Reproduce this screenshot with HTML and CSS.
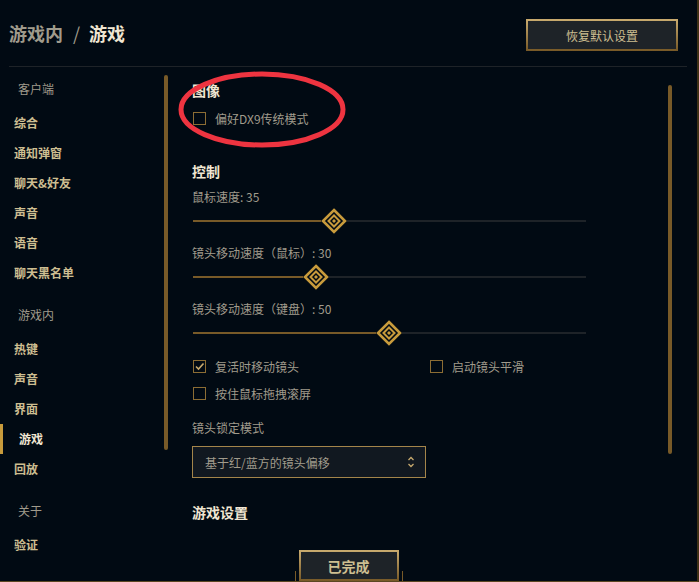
FILE: index.html
```html
<!DOCTYPE html>
<html lang="zh-CN">
  <head>
    <meta charset="UTF-8" />
    <meta name="viewport" content="width=device-width, initial-scale=1.0" />
    <title>设置 - 游戏</title>
    <link rel="stylesheet" href="styles.css">
  </head>

  <body>
    <div class="frame">
      <header class="topbar">
        <h1 class="crumbs">
          <span class="crumb-parent">游戏内</span>
          <span class="crumb-sep">/</span>
          <span class="crumb-current">游戏</span>
        </h1>
        <button class="btn-gold btn-reset" type="button">恢复默认设置</button>
      </header>

      <div class="layout">
        <nav class="nav">
          <div class="nav-list">
            <div class="nav-group">
              <div class="nav-label">客户端</div>
              <a class="nav-item">综合</a>
              <a class="nav-item">通知弹窗</a>
              <a class="nav-item">聊天&amp;好友</a>
              <a class="nav-item">声音</a>
              <a class="nav-item">语音</a>
              <a class="nav-item">聊天黑名单</a>
            </div>
            <div class="nav-group">
              <div class="nav-label">游戏内</div>
              <a class="nav-item">热键</a>
              <a class="nav-item">声音</a>
              <a class="nav-item">界面</a>
              <a class="nav-item is-active">游戏</a>
              <a class="nav-item">回放</a>
            </div>
            <div class="nav-group">
              <div class="nav-label">关于</div>
              <a class="nav-item">验证</a>
            </div>
          </div>
          <div class="nav-scroll"></div>
        </nav>

        <main class="content">
          <div class="content-inner">
            <h2 class="section-title">图像</h2>
            <label class="check-row first-check">
              <span class="box"></span>
              <span>偏好DX9传统模式</span>
            </label>

            <h2 class="section-title control-title">控制</h2>

            <div class="slider-field">
              <div class="field-text">鼠标速度: 35</div>
              <div class="slider" style="--v: 35">
                <span class="slider-fill"></span>
                <svg class="thumb" viewBox="0 0 26 26" width="26" height="26">
                  <polygon points="13,2 24,13 13,24 2,13" fill="#010a13" stroke="#c89b3c" stroke-width="2.6" />
                  <polygon points="13,7.5 18.5,13 13,18.5 7.5,13" fill="none" stroke="#c89b3c" stroke-width="2" />
                  <polygon points="13,11 15,13 13,15 11,13" fill="#c89b3c" />
                </svg>
                <span class="slider-rest"></span>
              </div>
            </div>

            <div class="slider-field">
              <div class="field-text">镜头移动速度（鼠标）: 30</div>
              <div class="slider" style="--v: 30">
                <span class="slider-fill"></span>
                <svg class="thumb" viewBox="0 0 26 26" width="26" height="26">
                  <polygon points="13,2 24,13 13,24 2,13" fill="#010a13" stroke="#c89b3c" stroke-width="2.6" />
                  <polygon points="13,7.5 18.5,13 13,18.5 7.5,13" fill="none" stroke="#c89b3c" stroke-width="2" />
                  <polygon points="13,11 15,13 13,15 11,13" fill="#c89b3c" />
                </svg>
                <span class="slider-rest"></span>
              </div>
            </div>

            <div class="slider-field">
              <div class="field-text">镜头移动速度（键盘）: 50</div>
              <div class="slider" style="--v: 50">
                <span class="slider-fill"></span>
                <svg class="thumb" viewBox="0 0 26 26" width="26" height="26">
                  <polygon points="13,2 24,13 13,24 2,13" fill="#010a13" stroke="#c89b3c" stroke-width="2.6" />
                  <polygon points="13,7.5 18.5,13 13,18.5 7.5,13" fill="none" stroke="#c89b3c" stroke-width="2" />
                  <polygon points="13,11 15,13 13,15 11,13" fill="#c89b3c" />
                </svg>
                <span class="slider-rest"></span>
              </div>
            </div>

            <div class="check-grid">
              <label class="check-row">
                <span class="box">
                  <svg viewBox="0 0 13 13" width="13" height="13">
                    <path d="M3 6.5 L5.5 9 L10.5 3.5" fill="none" stroke="#c8aa6e" stroke-width="1.6" />
                  </svg>
                </span>
                <span>复活时移动镜头</span>
              </label>
              <label class="check-row">
                <span class="box"></span>
                <span>启动镜头平滑</span>
              </label>
              <label class="check-row">
                <span class="box"></span>
                <span>按住鼠标拖拽滚屏</span>
              </label>
            </div>

            <div class="field-text lock-label">镜头锁定模式</div>
            <div class="select">
              <span>基于红/蓝方的镜头偏移</span>
              <svg class="select-arrows" viewBox="0 0 8 12" width="8" height="12">
                <path d="M1.5 4 L4 1.5 L6.5 4" fill="none" stroke="#c8aa6e" stroke-width="1.3" />
                <path d="M1.5 8 L4 10.5 L6.5 8" fill="none" stroke="#c8aa6e" stroke-width="1.3" />
              </svg>
            </div>

            <h2 class="section-title game-title">游戏设置</h2>
          </div>
          <div class="content-scroll"></div>
        </main>
      </div>

      <div class="footer-done">
        <span class="done-deco"></span>
        <button class="btn-gold btn-done" type="button">已完成</button>
        <span class="done-deco"></span>
      </div>

      <!-- 标注圈 -->
      <svg class="annotation" viewBox="0 0 190 95" width="190" height="95">
        <ellipse cx="92" cy="44.5" rx="81" ry="35.5" fill="none" stroke="#ee3440" stroke-width="5" />
      </svg>
    </div>
  </body>
</html>
```

FILE: styles.css
```css
body {
  margin: 0;
  background-color: #010a13;
  color: #a09b8c;
  font-family: "Noto Sans CJK SC", "Noto Sans", sans-serif;
  font-size: 12px;
}

.frame {
  position: relative;
  width: 697px;
  height: 581px;
  border-right: 2px solid #3f3116;
  border-bottom: 1px solid #5b4722;
  overflow: hidden;
}

/* 顶部 */
.topbar {
  display: flex;
  justify-content: space-between;
  align-items: flex-start;
  height: 66px;
  margin: 0 10px 0 9px;
  border-bottom: 1px solid #1e2328;
}

.crumbs {
  margin: 21px 0 0;
  font-size: 18px;
  line-height: 24px;
  font-weight: bold;
  display: flex;
}

.crumb-parent {
  color: #a09b8c;
}

.crumb-sep {
  color: #a09b8c;
  font-weight: normal;
  margin: 0 9px 0 10px;
}

.crumb-current {
  color: #f0e6d2;
}

.btn-gold {
  font-family: inherit;
  background-color: #1e2328;
  color: #cdbe91;
  border: 2px solid;
  border-image: linear-gradient(#c8aa6e, #785a28) 1;
  cursor: pointer;
  padding: 0;
}

.btn-reset {
  margin: 19px 9px 0 0;
  width: 152px;
  height: 32px;
  font-size: 12px;
}

/* 主体 */
.layout {
  display: flex;
  height: 514px;
}

.nav {
  display: flex;
  width: 192px;
  flex: none;
}

.nav-list {
  width: 164px;
  padding-top: 7px;
}

.nav-group + .nav-group {
  margin-top: 12px;
}

.nav-label {
  height: 30px;
  line-height: 30px;
  padding-left: 18px;
  margin-bottom: 4px;
  color: #a09b8c;
}

.nav-item {
  display: block;
  height: 30px;
  line-height: 30px;
  padding-left: 14px;
  color: #cdbe91;
  font-weight: bold;
  cursor: pointer;
}

.nav-item.is-active {
  padding-left: 19px;
  color: #f0e6d2;
  box-shadow: inset 3px 0 0 #c89b3c;
}

.nav-scroll,
.content-scroll {
  width: 4px;
  border-radius: 2px;
  background-color: #785a28;
  flex: none;
}

.nav-scroll {
  margin-top: 8px;
  height: 375px;
}

.content {
  flex: 1;
  display: flex;
}

.content-inner {
  flex: 1;
  padding-top: 13px;
  overflow: hidden;
}

.content-scroll {
  margin: 18px 25px 0 0;
  height: 369px;
}

.section-title {
  margin: 0;
  font-size: 14px;
  line-height: 20px;
  color: #f0e6d2;
  font-weight: bold;
}

.control-title {
  margin-top: 33px;
}

.game-title {
  margin-top: 24px;
}

.check-row {
  display: flex;
  align-items: center;
  gap: 9px;
  height: 20px;
  color: #a09b8c;
  cursor: pointer;
}

.first-check {
  margin: 8px 0 0 1px;
}

.box {
  width: 11px;
  height: 11px;
  border: 1px solid #8c6d34;
  display: flex;
  flex: none;
}

.box svg {
  margin: -1px;
}

.field-text {
  height: 20px;
  line-height: 20px;
  color: #a09b8c;
}

.slider-field {
  margin-top: 8px;
}

.control-title + .slider-field {
  margin-top: 6px;
}

.slider {
  display: flex;
  align-items: center;
  width: 393px;
  height: 28px;
  padding-left: 1px;
}

.slider-fill {
  height: 2px;
  background-color: #785a28;
  width: calc((392px - 26px) * var(--v) / 100);
}

.slider-rest {
  flex: 1;
  height: 2px;
  background-color: #1e2328;
}

.thumb {
  flex: none;
}

.check-grid {
  display: grid;
  grid-template-columns: 237px 1fr;
  row-gap: 7px;
  margin: 9px 0 0 1px;
}

.lock-label {
  margin-top: 15px;
}

.select {
  display: flex;
  justify-content: space-between;
  align-items: center;
  box-sizing: border-box;
  width: 234px;
  height: 32px;
  margin-top: 8px;
  padding: 0 10px 0 12px;
  background-color: #111820;
  border: 1px solid #a4854a;
  color: #a09b8c;
}

/* 底部按钮 */
.footer-done {
  position: absolute;
  left: 0;
  right: 0;
  bottom: 0;
  display: flex;
  justify-content: center;
  align-items: flex-end;
}

.btn-done {
  width: 100px;
  height: 31px;
  margin: 0 3px;
  font-size: 14px;
  font-weight: bold;
}

.done-deco {
  width: 1px;
  height: 10px;
  background-color: #785a28;
}

.annotation {
  position: absolute;
  left: 170px;
  top: 65px;
  pointer-events: none;
}
```
